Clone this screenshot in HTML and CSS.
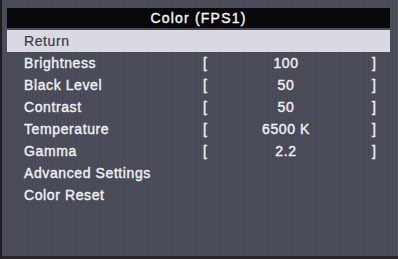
FILE: index.html
```html
<!DOCTYPE html>
<html>
<head>
  <meta charset="UTF-8">
  <title>Color (FPS1)</title>
  <link rel="stylesheet" href="styles.css">
</head>
<body>
  <div class="screen">
    <div class="title">Color (FPS1)</div>
    <div class="menu">
      <div class="row active"><span class="label">Return</span></div>
      <div class="row">
        <span class="label">Brightness</span><span class="br">[</span><span class="val">100</span><span class="br">]</span>
      </div>
      <div class="row">
        <span class="label">Black Level</span><span class="br">[</span><span class="val">50</span><span class="br">]</span>
      </div>
      <div class="row">
        <span class="label">Contrast</span><span class="br">[</span><span class="val">50</span><span class="br">]</span>
      </div>
      <div class="row">
        <span class="label">Temperature</span><span class="br">[</span><span class="val">6500 K</span><span class="br">]</span>
      </div>
      <div class="row">
        <span class="label">Gamma</span><span class="br">[</span><span class="val">2.2</span><span class="br">]</span>
      </div>
      <div class="row"><span class="label">Advanced Settings</span></div>
      <div class="row"><span class="label">Color Reset</span></div>
    </div>
  </div>
</body>
</html>
```

FILE: styles.css
```css
body {
  margin: 0;
  background: #2a262c;
  font-family: "Liberation Sans", Arial, sans-serif;
}
.screen {
  width: 398px;
  height: 259px;
  box-sizing: border-box;
  border-left: 2px solid #1c1b21;
  border-bottom: 3px solid #2a2428;
  padding: 8px 8px 0 5px;
  background-color: #4b4d5a;
  background-image: repeating-linear-gradient(90deg, rgba(0,0,0,0.05) 0 1px, transparent 1px 3px);
}
.title {
  height: 20px;
  line-height: 20px;
  background: #080808;
  color: #f2f2f2;
  text-align: center;
  font-size: 14px;
  letter-spacing: 1.2px;
  -webkit-text-stroke: 0.4px #f2f2f2;
}
.menu {
  margin-top: 2px;
}
.row {
  display: grid;
  grid-template-columns: 179px 8px 150px 11px 8px;
  height: 22px;
  line-height: 22px;
  padding-left: 17px;
  color: #f0f0f4;
  font-size: 14px;
  letter-spacing: 0.6px;
  -webkit-text-stroke: 0.4px #f0f0f4;
}
.row.active {
  background: #d9d9e1;
  color: #3a3a44;
  -webkit-text-stroke: 0.2px #3a3a44;
}
.val {
  text-align: center;
}
.br:last-child {
  grid-column: 5;
}
```
